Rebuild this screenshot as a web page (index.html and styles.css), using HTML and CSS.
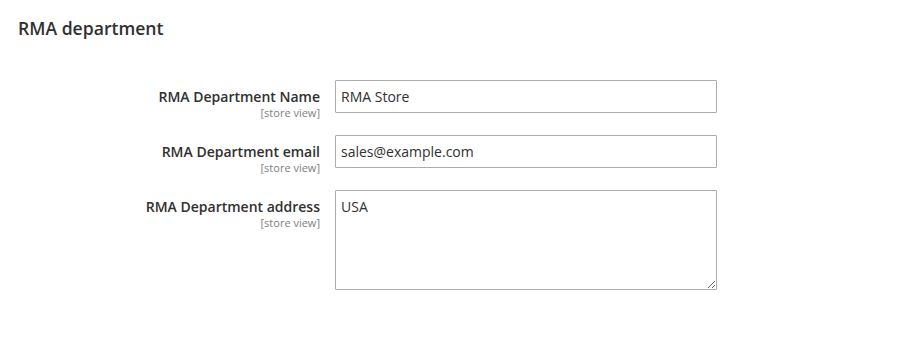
FILE: index.html
```html
<!DOCTYPE html>
<html>
<head>
<meta charset="utf-8">
<link rel="stylesheet" href="styles.css">
</head>
<body>
<div class="page">
  <h2 class="section-title">RMA department</h2>
  <div class="form">
    <div class="row">
      <div class="label-col">
        <div class="label">RMA Department Name</div>
        <div class="scope">[store view]</div>
      </div>
      <input class="field" type="text" value="RMA Store">
    </div>
    <div class="row">
      <div class="label-col">
        <div class="label">RMA Department email</div>
        <div class="scope">[store view]</div>
      </div>
      <input class="field" type="text" value="sales@example.com">
    </div>
    <div class="row">
      <div class="label-col">
        <div class="label">RMA Department address</div>
        <div class="scope">[store view]</div>
      </div>
      <textarea class="field area">USA</textarea>
    </div>
  </div>
</div>
</body>
</html>
```
FILE: styles.css
```css
html, body {
  margin: 0;
  padding: 0;
  background: #ffffff;
}
body {
  font-family: "Open Sans", "Noto Sans", sans-serif;
  color: #303030;
}
.page {
  padding: 16px 18px 0 18px;
}
.section-title {
  margin: 0;
  font-size: 17.6px;
  font-weight: 600;
  line-height: 24px;
  color: #303030;
}
.form {
  margin-top: 40px;
  display: flex;
  flex-direction: column;
  gap: 16px;
}
.row {
  display: flex;
  align-items: flex-start;
  gap: 15px;
}
.label-col {
  width: 302px;
  text-align: right;
  padding-top: 7px;
}
.label {
  font-size: 14px;
  font-weight: 600;
  line-height: 20px;
  color: #303030;
}
.scope {
  font-size: 11px;
  line-height: 12px;
  color: #808080;
}
.field {
  box-sizing: border-box;
  width: 382px;
  height: 33px;
  margin: 0;
  border: 1px solid #adadad;
  border-radius: 1px;
  padding: 0 5px;
  font-family: "Open Sans", "Noto Sans", sans-serif;
  font-size: 14px;
  color: #303030;
  background: #fff;
  outline: none;
}
.area {
  height: 100px;
  padding: 6px 5px;
  line-height: 20px;
  resize: both;
}
```
